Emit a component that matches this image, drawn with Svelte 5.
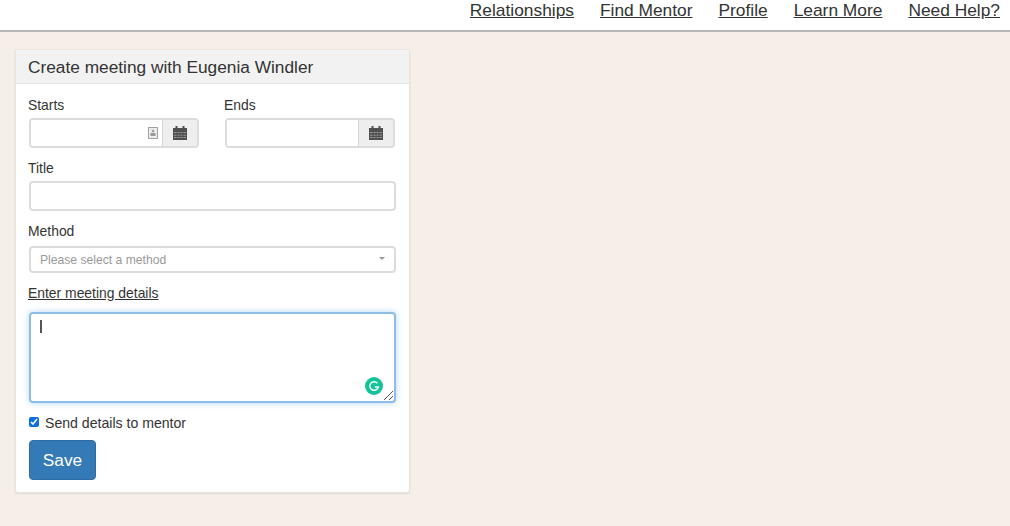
<script>
	const links = ['Relationships', 'Find Mentor', 'Profile', 'Learn More', 'Need Help?'];
</script>

{#snippet calendar()}
	<svg class="cal" width="14" height="14" viewBox="0 0 14 14" aria-hidden="true">
		<path fill="#4f4f4f" d="M2.500 0h2v2h5V0h2v2H14v12H0V2h2.500z" />
		<path fill="#b4b4b4" d="M1 6h2.600v.8H1zM4.500 6h2.100v.8H4.500zM7.500 6h2.100v.8H7.500zM10.500 6H13v.8h-2.500zM1 8.700h2.600v.8H1zM4.500 8.700h2.100v.8H4.500zM7.500 8.700h2.100v.8H7.500zM10.500 8.700H13v.8h-2.500zM1 11.300h2.600v.8H1zM4.500 11.300h2.100v.8H4.500zM7.500 11.300h2.100v.8H7.500zM10.500 11.300H13v.8h-2.500z" />
	</svg>
{/snippet}

<nav class="topnav">
	{#each links as link}
		<a href="#top">{link}</a>
	{/each}
</nav>

<main class="page">
	<section class="panel">
		<h1 class="panel-heading">Create meeting with Eugenia Windler</h1>
		<form class="panel-body">
			<div class="dates">
				<div class="date-field">
					<span class="label">Starts</span>
					<div class="input-group">
						<div class="control">
							<svg class="contact" width="10" height="12" viewBox="0 0 10 12" aria-hidden="true">
								<rect x="0.500" y="0.500" width="9" height="11" fill="#ececec" stroke="#a3a3a3" />
								<circle cx="5" cy="4" r="1.200" fill="#999" />
								<rect x="2.500" y="6" width="5" height="3" fill="#999" />
							</svg>
						</div>
						<div class="addon">{@render calendar()}</div>
					</div>
				</div>
				<div class="date-field">
					<span class="label">Ends</span>
					<div class="input-group">
						<div class="control"></div>
						<div class="addon">{@render calendar()}</div>
					</div>
				</div>
			</div>

			<span class="label title-label">Title</span>
			<div class="input"></div>

			<span class="label method-label">Method</span>
			<div class="select">
				<span>Please select a method</span>
				<i class="caret"></i>
			</div>

			<span class="label details-label">Enter meeting details</span>
			<div class="textarea">
				<i class="text-cursor"></i>
				<svg class="grammarly" width="18" height="18" viewBox="0 0 18 18" aria-hidden="true">
					<circle cx="9" cy="9" r="9" fill="#15c39a" />
					<path d="M12.400 6.200A4.300 4.300 0 1 0 13.300 10H10" fill="none" stroke="#fff" stroke-width="1.400" />
				</svg>
				<svg class="grip" width="11" height="11" viewBox="0 0 11 11" aria-hidden="true">
					<path d="M1 10 10 1M6 10l4-4" stroke="#555" stroke-width="1" fill="none" />
				</svg>
			</div>

			<label class="check">
				<input type="checkbox" checked />
				<span>Send details to mentor</span>
			</label>

			<button type="button" class="save">Save</button>
		</form>
	</section>
</main>

<style>
	:global(body) {
		background: #f5efe7;
		font-family: 'Liberation Sans', Arial, sans-serif;
		color: #333;
	}

	.topnav {
		height: 30px;
		display: flex;
		justify-content: flex-end;
		align-items: flex-start;
		gap: 26px;
		padding-right: 10px;
		background: #fff;
		border-bottom: 2px solid #b6b6b6;
	}

	.topnav a {
		color: #333;
		font-size: 17.350px;
		line-height: 20px;
	}

	.page {
		padding: 17px 0 33px 15px;
	}

	.panel {
		width: 395px;
		box-sizing: border-box;
		background: #fff;
		border: 1px solid #e6e3e0;
		border-radius: 3px;
		box-shadow: 0 1px 2px rgba(0, 0, 0, 0.1);
	}

	.panel-heading {
		margin: 0;
		height: 34px;
		box-sizing: border-box;
		padding: 7px 12px 0;
		background: #f2f2f2;
		border-bottom: 1px solid #e2e2e2;
		font-size: 17.300px;
		font-weight: 400;
		line-height: 20px;
	}

	.panel-body {
		display: flex;
		flex-direction: column;
		align-items: flex-start;
		padding: 13px 13px 12px;
	}

	.label {
		display: block;
		margin-left: -1px;
		font-size: 13.900px;
		line-height: 17px;
	}

	.dates {
		display: flex;
		gap: 26.500px;
	}

	.date-field {
		width: 169.500px;
	}

	.input-group {
		display: flex;
		height: 30px;
		margin-top: 4px;
		box-sizing: border-box;
		border: 2px solid #dcdcdc;
		border-radius: 4px;
		overflow: hidden;
	}

	.control {
		flex: 1;
		display: flex;
		justify-content: flex-end;
		align-items: center;
		padding-right: 4px;
		background: #fff;
	}

	.contact {
		display: block;
	}

	.addon {
		width: 34px;
		display: flex;
		justify-content: center;
		align-items: center;
		background: #eee;
		border-left: 1px solid #d6d6d6;
	}

	.cal {
		display: block;
	}

	.title-label {
		margin-top: 12px;
	}

	.input {
		width: 367px;
		height: 30px;
		margin-top: 4px;
		box-sizing: border-box;
		border: 2px solid #dcdcdc;
		border-radius: 4px;
	}

	.method-label {
		margin-top: 12px;
	}

	.select {
		width: 367px;
		height: 27px;
		margin-top: 6px;
		box-sizing: border-box;
		display: flex;
		align-items: center;
		justify-content: space-between;
		padding: 0 9px 0 9px;
		border: 2px solid #dcdcdc;
		border-radius: 4px;
		font-size: 12.150px;
		color: #999;
	}

	.caret {
		width: 0;
		height: 0;
		margin-top: -2px;
		border-left: 3.500px solid transparent;
		border-right: 3.500px solid transparent;
		border-top: 3px solid #999;
	}

	.details-label {
		margin-top: 12px;
		text-decoration: underline;
	}

	.textarea {
		position: relative;
		width: 367px;
		height: 91px;
		margin-top: 10px;
		box-sizing: border-box;
		border: 2px solid #8dbde4;
		border-radius: 4px;
		box-shadow: 0 0 6px rgba(102, 175, 233, 0.5);
	}

	.text-cursor {
		position: absolute;
		left: 9px;
		top: 6px;
		width: 1.500px;
		height: 13px;
		background: #555;
	}

	.grammarly {
		position: absolute;
		right: 11px;
		bottom: 6px;
	}

	.grip {
		position: absolute;
		right: 0;
		bottom: 0;
	}

	.check {
		display: flex;
		align-items: center;
		gap: 6px;
		margin-top: 12px;
		font-size: 14.100px;
		line-height: 17px;
	}

	.check input {
		width: 10px;
		height: 10px;
		margin: -4px 0 0 0;
		accent-color: #0b6fe0;
	}

	.save {
		width: 67px;
		height: 40px;
		margin-top: 8px;
		background: #337ab7;
		border: 1px solid #2e6da4;
		border-radius: 4px;
		color: #fff;
		font-family: inherit;
		font-size: 17.300px;
		padding: 0;
	}
</style>
